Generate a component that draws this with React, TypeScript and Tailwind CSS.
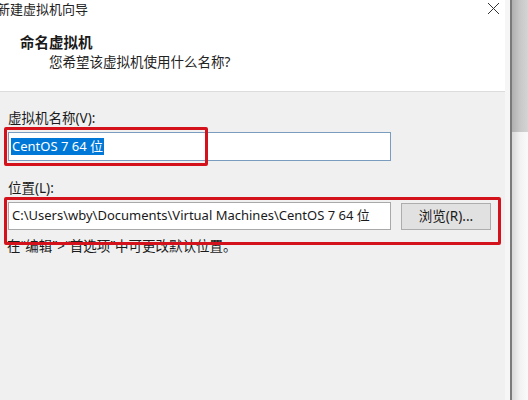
import React from 'react';

const font = { fontFamily: '"Noto Sans", "Noto Sans CJK SC", sans-serif' };

export default function App() {
    return (
        <div className="flex w-[528px] h-[400px] overflow-hidden bg-[#f0f0f0] text-[#1a1a1a]" style={font}>
            <div className="relative flex flex-col w-[510px] h-full">
                {/* header */}
                <div className="h-[92px] bg-white border-b border-[#dcdcdc] relative">
                    <div className="flex items-center justify-between h-[20px] pr-[10px]">
                        <span className="text-[13px] -ml-[3px] text-[#222]">新建虚拟机向导</span>
                        <svg width="13" height="13" viewBox="0 0 13 13" className="mt-[-4px]">
                            <path d="M1 1 L12 12 M12 1 L1 12" stroke="#333" strokeWidth="1" />
                        </svg>
                    </div>
                    <div className="pl-[20px] pt-[12px] text-[14.5px] font-bold leading-[20px]">命名虚拟机</div>
                    <div className="pl-[49px] text-[13.5px] leading-[20px] text-[#222]">您希望该虚拟机使用什么名称?</div>
                </div>

                {/* body */}
                <div className="flex-1 pl-[8px] pr-[19px] pt-[16px] text-[13.5px]">
                    <div className="leading-[20px]">虚拟机名称(V):</div>
                    <div className="mt-[4px] w-[383px] h-[29px] bg-white border border-[#7a9cbe] flex items-center pl-[2px]">
                        <span className="bg-[#0078d7] text-white text-[13px] leading-[17px] px-[1px]">CentOS 7 64 位</span>
                    </div>
                    <div className="mt-[17px] leading-[20px]">位置(L):</div>
                    <div className="mt-[4px] flex items-center gap-[10px]">
                        <div className="w-[383px] h-[28px] bg-white border border-[#a9a9a9] flex items-center pl-[3px] text-[13px] whitespace-nowrap overflow-hidden">
                            C:\Users\wby\Documents\Virtual Machines\CentOS 7 64 位
                        </div>
                        <div className="w-[90px] h-[27px] bg-[#e1e1e1] border border-[#adadad] flex items-center justify-center text-[13.5px]">
                            浏览(R)...
                        </div>
                    </div>
                    <div className="mt-[6px] leading-[20px] -ml-[1px]">{'在“编辑”>“首选项”中可更改默认位置。'}</div>
                </div>

                {/* annotation boxes */}
                <div className="absolute left-[4px] top-[127px] w-[204px] h-[39px] border-[3px] border-[#d4121c] rounded-[2px]" />
                <div className="absolute left-[4px] top-[197px] w-[497px] h-[48px] border-[3px] border-[#d4121c] rounded-[2px]" />
                <div className="absolute right-0 top-0 w-[5px] h-full bg-[#f6f6f6]" />
            </div>
            <div className="w-[2px] h-full bg-[#7a7a7a]" />
            <div className="flex-1 flex flex-col">
                <div className="h-[132px] bg-gradient-to-r from-[#b0b0b0] via-[#c8c8c8] to-[#d4d4d4]" />
                <div className="flex-1 bg-gradient-to-r from-[#d8d8d8] via-[#f2f2f2] to-[#fafafa]" />
            </div>
        </div>
    );
}
